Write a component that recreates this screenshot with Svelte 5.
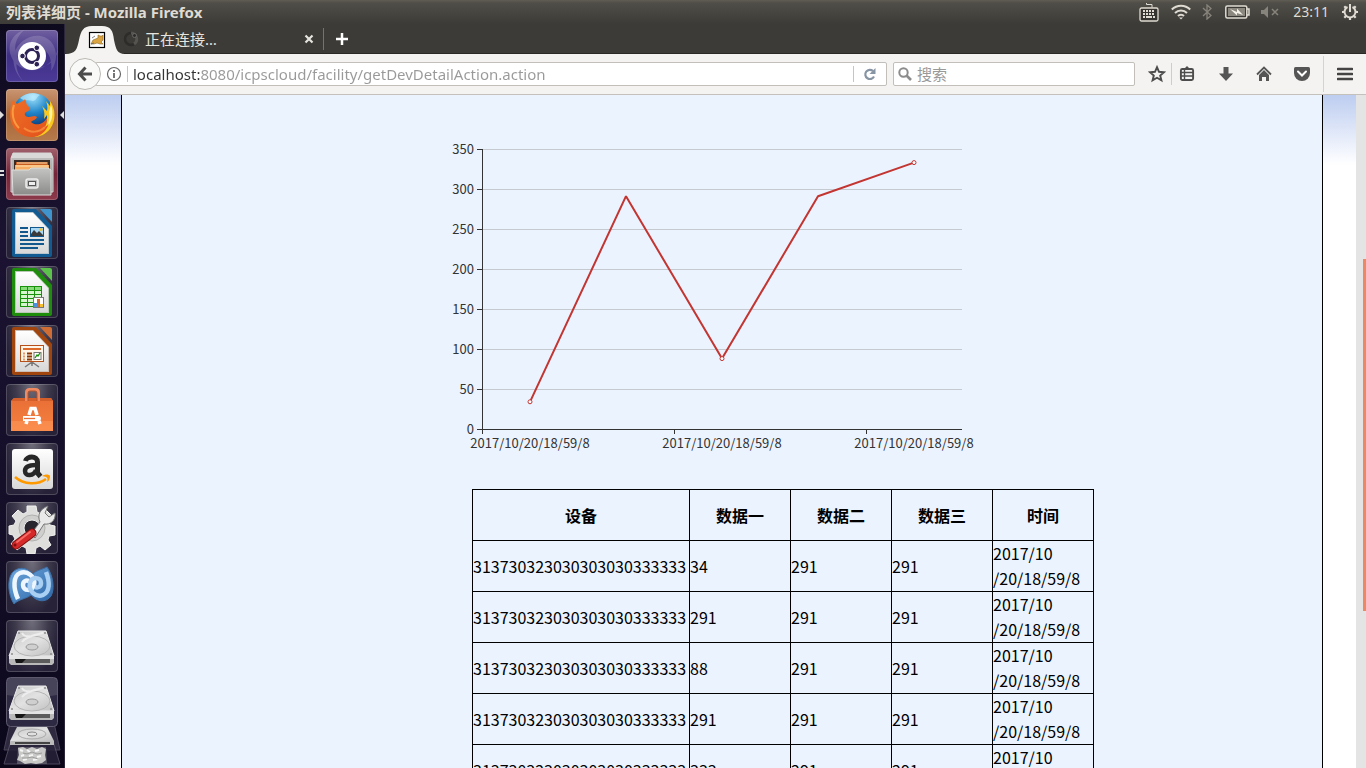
<script>
  const device = '313730323030303030333333';
  const stamp = '2017/10/20/18/59/8';
  const headers = ['设备', '数据一', '数据二', '数据三', '时间'];
  const values = [34, 291, 88, 291, 333];
  const ticks = [0, 50, 100, 150, 200, 250, 300, 350];

  const plotX = (i) => 60 + 48 + i * 96;
  const plotY = (v) => 340 - v * 0.8;
  const line = values.map((v, i) => `${plotX(i)},${plotY(v)}`).join(' ');
</script>

{#snippet drive()}
  <path d="M12 11h28l8 25H3z" fill="url(#metal)" stroke="#ececec" stroke-width="1" />
  <path d="M3 36h45v7l-2 2H5l-2-2z" fill="#b9b9b9" />
  <path d="M3 36h45v3H3z" fill="#e4e4e4" />
  <path d="M9 39h35v4H10z" fill="#5c5c5c" />
  <path d="M9 39h11l-4 4h-6z" fill="#161616" />
  <ellipse cx="26" cy="26" rx="18" ry="10" fill="none" stroke="#b5b5b5" />
  <path d="M16 13c4 7 15 1 20 0 4 0-15 2-20 9" fill="none" stroke="#ededed" stroke-width="2" />
  <ellipse cx="26" cy="27" rx="6" ry="3" fill="#cfcfcf" stroke="#999" />
  <g fill="#8d8d8d"><circle cx="13" cy="13" r="1" /><circle cx="39" cy="13" r="1" /><circle cx="6" cy="34" r="1" /><circle cx="45" cy="34" r="1" /></g>
{/snippet}

<div class="desktop">
  <header class="panel">
    <div class="window-title">列表详细页 - Mozilla Firefox</div>
    <div class="indicators">
      <svg class="ind kb" width="20" height="22" viewBox="0 0 20 22" fill="none" stroke="#dfdbd2">
        <path d="M7.500 2v1.500h5.500v3" /><rect x="1" y="7" width="18" height="13" rx="1.500" fill="#34332f" stroke-width="1.300" />
        <path d="M4 10h12M4 13h12" stroke-width="2" stroke-dasharray="2 1" /><path d="M4 16h2m1 0h6m1 0h2" stroke-width="2" />
      </svg>
      <svg class="ind wifi" width="20" height="16" viewBox="0 0 20 16" fill="none" stroke="#dfdbd2" stroke-width="2">
        <path d="M.8 5.500a13 13 0 0 1 18.400 0M4 9a8.500 8.500 0 0 1 12 0M7 12a4.200 4.200 0 0 1 6 0" /><path d="M8 13.500h4l-2 2z" fill="#dfdbd2" stroke="none" />
      </svg>
      <svg class="ind bt" width="10" height="16" viewBox="0 0 10 16" fill="none" stroke="#87847b" stroke-width="1.300">
        <path d="M1 4l8 7.500L5 15V1l4 3.500L1 12" />
      </svg>
      <svg class="ind bat" width="25" height="14" viewBox="0 0 25 14">
        <rect x=".8" y="1" width="21" height="12" rx="1.500" fill="#3b3a36" stroke="#dfdbd2" stroke-width="1.500" />
        <path d="M22 4h2v6h-2" fill="none" stroke="#dfdbd2" stroke-width="1.500" /><path d="M3 3h17v8H3z" fill="#8b887f" />
        <path d="M5 4l7 3V3.500l6 6.500-6-2v2.500z" fill="#f4f1e9" />
      </svg>
      <svg class="ind mute" width="18" height="14" viewBox="0 0 18 14" fill="#87847b">
        <path d="M0 5h3l4-4v12L3 9H0z" /><path d="M11 4l6 6m0-6l-6 6" stroke="#87847b" stroke-width="1.500" />
      </svg>
      <span class="clock">23:11</span>
      <svg class="ind gear" width="18" height="18" viewBox="0 0 18 18" fill="none" stroke="#dfdbd2">
        <path d="M9 1v8" stroke-width="2" /><path d="M6.500 4a5.500 5.500 0 1 0 5 0" stroke-width="2" />
        <path d="M9 14v3M14 9h3M1 9h3M12.500 12.500l2.200 2.200M5.500 12.500l-2.200 2.200M12.500 5.500l2.200-2.200M5.500 5.500L3.300 3.300" stroke-width="2.200" />
      </svg>
    </div>
  </header>

  <div class="workspace">
    <nav class="launcher" aria-label="Launcher">
      <svg class="defs" width="0" height="0">
        <defs>
          <linearGradient id="metal" x1="0" y1="0" x2="1" y2="1"><stop offset="0" stop-color="#c4c4c4" /><stop offset=".5" stop-color="#e2e2e2" /><stop offset="1" stop-color="#bdbdbd" /></linearGradient>
          <linearGradient id="paper" x1="0" y1="0" x2="0" y2="1"><stop offset="0" stop-color="#fff" /><stop offset="1" stop-color="#d8d8d8" /></linearGradient>
          <radialGradient id="globe" cx=".5" cy=".1" r=".8"><stop offset="0" stop-color="#9fe2fb" /><stop offset=".5" stop-color="#1f84c8" /><stop offset="1" stop-color="#0c2e6c" /></radialGradient>
          <linearGradient id="fox" x1="0" y1="0" x2="1" y2="1"><stop offset="0" stop-color="#ee6f26" /><stop offset="1" stop-color="#e2521c" /></linearGradient>
          <linearGradient id="cabinet" x1="0" y1="0" x2="0" y2="1"><stop offset="0" stop-color="#c4c4c2" /><stop offset="1" stop-color="#8b8b89" /></linearGradient>
          <linearGradient id="bag" x1="0" y1="0" x2="0" y2="1"><stop offset="0" stop-color="#e86f36" /><stop offset="1" stop-color="#f5803f" /></linearGradient>
          <linearGradient id="swirl" x1="0" y1="0" x2="1" y2="1"><stop offset="0" stop-color="#6fa8dc" /><stop offset="1" stop-color="#2a64a8" /></linearGradient>
        </defs>
      </svg>

      <button class="tile home" aria-label="Dash">
        <svg viewBox="0 0 52 52">
          <g fill="#fff" opacity=".16"><path d="M18 52C4 40 2 16 24 7 44 0 58 22 45 41 48 22 34 12 20 17 7 24 8 42 18 52z" /><path d="M52 20C40 48 12 44 5 26 0 12 9 3 18 0-1 18 14 40 32 38 44 36 50 30 52 20z" /></g>
          <circle cx="26" cy="26" r="14" fill="#fff" />
          <circle cx="26" cy="26" r="6.500" fill="none" stroke="#2d2155" stroke-width="3" />
          <g fill="#2d2155" stroke="#fff"><circle cx="16.500" cy="26" r="2.800" /><circle cx="30.800" cy="17.800" r="2.800" /><circle cx="30.800" cy="34.200" r="2.800" /></g>
        </svg>
      </button>
      <button class="tile firefox" aria-label="Firefox">
        <svg viewBox="0 0 52 52">
          <circle cx="27" cy="24" r="20" fill="url(#globe)" />
          <path d="M14 9c5-5 14-6 20-3-4 2-3 5-7 6-4-2-7 1-13-3z" fill="#c8f0ff" opacity=".6" />
          <path d="M44 12c6 8 6 20 0 28-4 5-10 8-16 8 9-6 14-14 13-22l-3 4c1-6 0-9-2-13l5 5c1-4 0-7-1-10l4 5z" fill="#f9c81e" />
          <path d="M45 16c3 8 1 17-4 22 2-5 3-10 2-15" fill="#fff3a2" />
          <path d="M7 11l4 4c3-2 6-2 8-5 1 2 1 4 2 6l3 3c0 3-3 3-5 5-1 3 2 4 4 4 3 0 5-2 8 0-1 3-4 3-6 5 4 4 12 3 16-4 0 5-1 7-2 9 2-1 3-2 4-4-2 8-9 14-17 14C13 48 4 38 4 25c0-5 1-10 3-14z" fill="url(#fox)" />
          <path d="M8 16c-3 8-1 17 5 23" fill="none" stroke="#f99a3e" stroke-width="2" /><path d="M18 39c6 5 15 5 21-1" fill="none" stroke="#f5873a" stroke-width="2" />
        </svg>
        <i class="running"></i><i class="focused"></i>
      </button>
      <button class="tile files" aria-label="Files">
        <svg viewBox="0 0 52 52">
          <path d="M7 5h38l2 5v34H5V10z" fill="url(#cabinet)" stroke="#d5d5d5" /><path d="M7 5h38l2 5H5z" fill="#d9d9d7" />
          <path d="M8 12h36v10H8z" fill="#3b2b27" /><path d="M10 14h32v8H10z" fill="#c75c20" /><path d="M9 17h34v5H9z" fill="#f6ad61" />
          <path d="M11 15h30M10 18h32" stroke="#ffe0b0" /><path d="M6 22h17l2-2h17l3 2v25H7z" fill="url(#cabinet)" stroke="#dedede" />
          <rect x="20" y="31" width="12" height="9" rx="2" fill="#bbb" stroke="#eee" stroke-width="1.500" /><rect x="22.500" y="33.500" width="7" height="4" fill="#eee" stroke="#555" />
        </svg>
        <i class="running double"></i>
      </button>
      <button class="tile" aria-label="Writer">
        <svg viewBox="0 0 52 52">
          <path d="M8 2h22l16 17v29q0 2-2 2H8q-2 0-2-2V4q0-2 2-2z" fill="#115b92" /><path d="M34 2h10q2 0 2 2v11z" fill="#3f94cd" />
          <path d="M9 5h18l16 17v25H9z" fill="#b8c4cc" /><path d="M10 6h17l15 16v24H10z" fill="url(#paper)" />
          <path d="M14 20h8v2h-8zM14 24h8v2h-8zM14 28h8v2h-8zM14 32h24v2H14zM14 36h24v2H14zM14 40h18v2H14z" fill="#13588c" />
          <rect x="24.500" y="20.500" width="13" height="9" fill="#a9d7f4" stroke="#13588c" /><path d="M25 29v-2l3-4 3 3 2-2 4 4v1z" fill="#3b3b3b" /><circle cx="35" cy="22.500" r="1.500" fill="#f2c12d" />
        </svg>
      </button>
      <button class="tile" aria-label="Calc">
        <svg viewBox="0 0 52 52">
          <path d="M8 2h22l16 17v29q0 2-2 2H8q-2 0-2-2V4q0-2 2-2z" fill="#1f8d0c" /><path d="M34 2h10q2 0 2 2v11z" fill="#5cc24b" />
          <path d="M9 5h18l16 17v25H9z" fill="#b9c8b5" /><path d="M10 6h17l15 16v24H10z" fill="url(#paper)" />
          <path d="M14 20h22v21H14z" fill="#18910b" /><path d="M15 25h6v3h-6zM22 25h6v3h-6zM29 25h6v3h-6zM15 29h6v3h-6zM22 29h6v3h-6zM29 29h6v3h-6zM15 33h6v3h-6zM22 33h6v3h-6zM15 37h6v3h-6zM22 37h6v3h-6z" fill="#d7f6cf" /><path d="M15 21h6v3h-6zM22 21h6v3h-6zM29 21h6v3h-6z" fill="#87dc79" />
          <rect x="27.500" y="31.500" width="10" height="10" fill="#fff" stroke="#777" /><path d="M28 37h3v4h-3z" fill="#4a92dd" /><path d="M31 33h3v8h-3z" fill="#db6622" /><path d="M34 38h3v3h-3z" fill="#f2c12d" />
        </svg>
      </button>
      <button class="tile" aria-label="Impress">
        <svg viewBox="0 0 52 52">
          <path d="M8 2h22l16 17v29q0 2-2 2H8q-2 0-2-2V4q0-2 2-2z" fill="#a1450f" /><path d="M34 2h10q2 0 2 2v11z" fill="#cf6d35" />
          <path d="M9 5h18l16 17v25H9z" fill="#cbbdb4" /><path d="M10 6h17l15 16v24H10z" fill="url(#paper)" />
          <path d="M26 37l-7 5m7-5l7 5M26 37v4" stroke="#777" stroke-width="1.500" /><rect x="14.500" y="20.500" width="23" height="16" fill="#fff5e9" stroke="#b6501b" />
          <path d="M17 24h18" stroke="#dd6a28" stroke-width="2" /><path d="M17 28.500h2m-2 3h2m-2 3h2" stroke="#e79a6c" stroke-width="2" /><path d="M21 28.500h5m-5 3h5m-5 3h5" stroke="#8b3807" stroke-width="2" />
          <rect x="28" y="27.500" width="7" height="7" fill="#fff" stroke="#777" /><path d="M29 33l2-3 1 1 2-3" fill="none" stroke="#18910b" stroke-width="1.300" />
        </svg>
      </button>
      <button class="tile" aria-label="Software">
        <svg viewBox="0 0 52 52">
          <path d="M5 17l3-3h37l2 3v30H5z" fill="url(#bag)" /><path d="M5 17h42l-2-3H8z" fill="#d55f2b" /><path d="M5 37h42v10H5z" fill="#ff9a5d" opacity=".5" />
          <path d="M20.500 17V8.500q0-3 3-3h6q3 0 3 3V17" fill="none" stroke="#ef8a61" stroke-width="3" /><path d="M22 17V9q0-2 2-2h5q2 0 2 2v8" fill="none" stroke="#b9532c" />
          <path d="M20 40l1-3m2-6l2-6.500h4l2 6.500m2 6l1 3" fill="none" stroke="#fff" stroke-width="3.600" /><path d="M17 32h16q2 0 2 2.500T33 37H17z" fill="#fff" /><path d="M18 34.500h11" stroke="#e86f36" stroke-width="1.300" />
        </svg>
      </button>
      <button class="tile" aria-label="Amazon">
        <svg viewBox="0 0 52 52">
          <rect x="6" y="6" width="41" height="40" rx="3" fill="url(#paper)" />
          <path d="M19.500 18c1-5 12-6 12 1v11l3 3.500" fill="none" stroke="#272727" stroke-width="5" /><path d="M30 22c-7 0-11 2-11 6 0 6 9 5 11-1" fill="none" stroke="#272727" stroke-width="4.500" />
          <path d="M9 34c9 8 23 8 31 2" fill="none" stroke="#f90" stroke-width="2.500" /><path d="M36 33c3-2 7-2 8 0 0 3-1 5-3 6 1-4 1-5-5-6z" fill="#f90" />
        </svg>
      </button>
      <button class="tile" aria-label="Settings">
        <svg viewBox="0 0 52 52">
          <path d="M21 4h9l1 6 4 2 5-4 6 6-4 5 2 4 5 1v9l-6 1-1 4 3 5-6 5-5-4-4 2-1 6h-8l-1-6-4-2-5 4-6-6 4-5-2-4-4-1v-8l5-1 2-4-4-5 6-6 5 4 4-2z" fill="#dededc" stroke="#f2f2f0" />
          <circle cx="26" cy="26" r="13" fill="#cfcfcd" stroke="#b1b1af" /><circle cx="26" cy="26" r="8" fill="#29252e" stroke="#eee" />
          <path d="M25 32l9-12c-3-7 0-13 8-16l-3 7 4 4 6-4c1 8-5 12-11 11L29 36z" fill="#e9e9e9" stroke="#777" />
          <path d="M26 31L10 43" stroke="#7f0f0f" stroke-width="9" stroke-linecap="round" /><path d="M26 31L10 43" stroke="#d62a2a" stroke-width="7" stroke-linecap="round" /><path d="M24 30L11 40" stroke="#f56c66" stroke-width="2" stroke-linecap="round" /><circle cx="9" cy="43" r="1.500" fill="#7f0f0f" />
        </svg>
      </button>
      <button class="tile" aria-label="MonoDevelop">
        <svg viewBox="0 0 52 52">
          <path d="M8 43C2 34 1 19 6 12c5-6 14-7 21 1 3-4 9-4 14-7 6 8 8 22 4 29-5 7-14 6-20-1-5 4-12 4-17 9z" fill="url(#swirl)" stroke="#3d6fa6" />
          <path d="M12 38C7 27 7 15 14 12c7-3 16 4 14 12-2 7-11 6-11 0 0-4 3-5 6-4" fill="none" stroke="#eef6ff" stroke-width="4.500" />
          <path d="M40 11c4 10 4 20-3 23-7 3-15-4-13-12 2-7 11-6 11 0 0 4-3 5-6 4" fill="none" stroke="#a9cff2" stroke-width="4.500" />
        </svg>
      </button>
      <button class="tile" aria-label="Volume"><svg viewBox="0 0 52 52">{@render drive()}</svg></button>
      <button class="pile" aria-label="More volumes">
        <svg viewBox="0 0 64 91">
          <path d="M10 46h44l6 27H4z" fill="#3a354b" opacity=".75" stroke="#5e596d" />
          <path d="M11 64h42l7 23H4z" fill="#28233a" opacity=".8" stroke="#5e596d" />
          <rect x="6.500" y=".5" width="51" height="49" rx="4" fill="#2e2942" stroke="#5e596d" /><path d="M9 1h46q2 0 2 4v13q-25 5-50 0V4q0-3 2-3z" fill="#fff" opacity=".12" />
          <g transform="translate(6 -2)">{@render drive()}</g>
          <path d="M17 50h30l7 14H10z" fill="url(#metal)" /><ellipse cx="32" cy="57" rx="14" ry="5" fill="none" stroke="#aaa" /><ellipse cx="32" cy="57" rx="5" ry="2" fill="none" stroke="#888" /><path d="M10 64h44v4H10z" fill="#bbb" /><path d="M15 65h35v2H15z" fill="#444" />
          <path d="M18 70h28l1 17H17z" fill="#77747f" opacity=".6" />
          <path d="M18 71l5-1 4 2 5-2 5 2 5-2 4 2-1 6 1 5-4 3-6 1-5-1-6 1-5-3-3-1 2-5z" fill="#c9c9c7" /><path d="M20 73l3 1m4-1l3 2m5-1l4-1M21 79l3-1m5 1l4-1m4 2l4-1M23 83l4-1m6 1l5-1" fill="none" stroke="#f5f5f5" stroke-width="2" /><path d="M23 76l4 1 5-2 5 2 5-1M22 81l5 0 5-1 6 2" fill="none" stroke="#9c9c9a" />
        </svg>
      </button>
    </nav>

    <main class="browser">
      <div class="tabs">
        <button class="pinned" aria-label="列表详细页">
          <svg width="60" height="30" viewBox="0 0 60 30">
            <path d="M0 30c11 0 12-5 14-14C16 7 18 2 27 2h10c9 0 11 5 12 14 2 9 3 14 11 14z" fill="#f4f3f1" />
            <rect x="24.500" y="8.500" width="15" height="15" fill="#fff" stroke="#000" stroke-width="1.200" />
            <path d="M26 20l2-4 5-2v-3l2 1h2l1-1v5l-2 2 2 2h-3l-3-1-3 1z" fill="#d9a441" stroke="#8b6a2a" stroke-width=".6" /><path d="M27 14l3-2m-4 8l3-1" stroke="#666" stroke-width=".8" />
          </svg>
        </button>
        <button class="tab">
          <svg width="16" height="16" viewBox="0 0 16 16" fill="none"><circle cx="8" cy="8" r="6" stroke="#2d2c2a" stroke-width="2.500" /><path d="M8 2a6 6 0 0 1 3 11" stroke="#55544f" stroke-width="3" /><circle cx="11.500" cy="4.500" r="2" fill="#2d2c2a" stroke="#777" stroke-width=".7" /></svg>
          <span>正在连接…</span>
        </button>
        <button class="close" aria-label="Close tab"><svg width="10" height="10" viewBox="0 0 10 10"><path d="M1.500 1.500l7 7m0-7l-7 7" stroke="#e6e4de" stroke-width="2.200" /></svg></button>
        <button class="new-tab" aria-label="New tab"><svg width="14" height="14" viewBox="0 0 14 14"><path d="M7 1v12M1 7h12" stroke="#fff" stroke-width="2.500" /></svg></button>
      </div>

      <div class="toolbar">
        <button class="back" aria-label="Back"><svg width="16" height="16" viewBox="0 0 16 16" fill="none" stroke="#4c4c4c" stroke-width="3"><path d="M8.500 1.500L2.500 8l6 6.500M3 8h12" /></svg></button>
        <div class="url">
          <svg width="16" height="16" viewBox="0 0 16 16" fill="none" stroke="#666"><circle cx="8" cy="8" r="6.500" stroke-width="1.200" /><path d="M8 7v5M8 4v2" stroke-width="1.800" /></svg>
          <span class="bar"></span>
          <input aria-label="Address" value="localhost:8080/icpscloud/facility/getDevDetailAction.action" />
          <span class="bar"></span>
          <button class="reload" aria-label="Reload"><svg width="14" height="14" viewBox="0 0 14 14"><path d="M11 9.500A4.600 4.600 0 1 1 10 4" fill="none" stroke="#8794a3" stroke-width="2.200" /><path d="M12.500 1v6h-6z" fill="#8794a3" /></svg></button>
        </div>
        <div class="search">
          <svg width="14" height="14" viewBox="0 0 14 14" fill="none" stroke="#8c8c8c" stroke-width="2"><circle cx="5.500" cy="5.500" r="4.200" /><path d="M8.500 8.500l4.500 4.500" stroke-width="2.600" /></svg>
          <input aria-label="搜索" placeholder="搜索" />
        </div>
        <div class="actions">
          <button class="star" aria-label="Bookmark"><svg width="18" height="18" viewBox="0 0 18 18"><path d="M9 2.200l2 4.600 5 .4-3.800 3.300 1.200 4.900L9 12.800l-4.400 2.600 1.200-4.900L2 7.200l5-.4z" fill="none" stroke="#4c4c4c" stroke-width="1.900" /></svg></button>
          <button class="list" aria-label="Bookmarks list"><svg width="16" height="16" viewBox="0 0 16 16"><path d="M5 3l3-3 3 3" fill="#4c4c4c" /><rect x="1.900" y="3" width="12.200" height="11" rx="1.500" fill="none" stroke="#4c4c4c" stroke-width="1.900" /><path d="M2 6.500h12M2 10h12M5.500 3v11" stroke="#4c4c4c" stroke-width="1.400" /></svg></button>
          <button aria-label="Downloads"><svg width="16" height="16" viewBox="0 0 16 16"><path d="M5.500 1h5v6.500H15L8 15 1 7.500h4.500z" fill="#555" /></svg></button>
          <button aria-label="Home"><svg width="16" height="16" viewBox="0 0 16 16"><path d="M1 8.500l7-7 7 7" fill="none" stroke="#555" stroke-width="1.800" /><path d="M3 9l5-5 5 5v6h-3v-4H6v4H3z" fill="#555" /></svg></button>
          <button aria-label="Pocket"><svg width="16" height="16" viewBox="0 0 16 16"><path d="M1.500 1h13q1.500 0 1.500 1.500V7a8 8 0 0 1-16 0V2.500Q0 1 1.500 1z" fill="#555" /><path d="M4 5.500l4 4 4-4" fill="none" stroke="#fff" stroke-width="2" stroke-linecap="round" /></svg></button>
          <button class="menu" aria-label="Menu"><svg width="16" height="14" viewBox="0 0 16 14"><path d="M1 2h14M1 7h14M1 12h14" stroke="#444" stroke-width="2.600" stroke-linecap="round" /></svg></button>
        </div>
      </div>

      <div class="viewport">
        <div class="page">
          <section class="content">
            <svg class="chart" width="600" height="394" viewBox="0 6 600 394" role="img" aria-label="数据一">
              {#each ticks as t}
                {#if t > 0}<path d="M60 {plotY(t) + 0.5}h480" stroke="#c4cad0" />{/if}
                <path d="M55 {plotY(t) + 0.5}h5" stroke="#333" />
                <text x="52" y={plotY(t) + 5} text-anchor="end">{t}</text>
              {/each}
              <path d="M60.500 60v281M60 340.500h480M252.500 340v5M444.500 340v5M60.500 340v5" stroke="#333" fill="none" />
              <polyline points={line} fill="none" stroke="#c23531" stroke-width="2" stroke-linejoin="bevel" />
              {#each values as v, i}
                {#if i % 2 === 0}
                  <circle cx={plotX(i)} cy={plotY(v)} r="2" fill="#fff" stroke="#c23531" />
                  <text x={plotX(i)} y="359" text-anchor="middle">{stamp}</text>
                {/if}
              {/each}
            </svg>
            <table>
              <thead><tr>{#each headers as h}<th scope="col">{h}</th>{/each}</tr></thead>
              <tbody>
                {#each values as v}
                  <tr><td>{device}</td><td>{v}</td><td>291</td><td>291</td><td>2017/10<wbr />/20/18/59/8</td></tr>
                {/each}
              </tbody>
            </table>
          </section>
        </div>
        <div class="scrollbar"><span></span></div>
      </div>
    </main>
  </div>
</div>

<style>
  :global(body) { background: #fff; }
  .desktop { height: 100vh; display: flex; flex-direction: column; overflow: hidden; font: 15px/20px "Noto Sans", "Noto Sans CJK SC", sans-serif; }
  button { border: 0; padding: 0; margin: 0; background: none; font: inherit; color: inherit; display: flex; align-items: center; justify-content: center; }
  svg { display: block; flex: none; }
  input { border: 0; outline: 0; padding: 0; background: none; font: inherit; min-width: 0; }

  .panel { height: 24px; flex: none; display: flex; align-items: center; justify-content: space-between; padding: 0 7px 0 6px; color: #dfdbd2; background: linear-gradient(#5f5d54, #504e48 12%, #3c3b37); }
  .window-title { font-weight: 700; }
  .indicators { display: flex; align-items: center; }
  .wifi { margin-left: 12px; }
  .bt { margin-left: 11px; }
  .bat { margin-left: 13px; }
  .mute { margin-left: 11px; }
  .clock { margin: 0 12px 0 14px; font-size: 14px; }

  .workspace { flex: 1; min-height: 0; display: flex; }
  .launcher { width: 64px; flex: none; overflow: hidden; padding: 6px 0 0; display: flex; flex-direction: column; align-items: center; gap: 7px; background: linear-gradient(#0e0a1e, #1b1331 30%, #140e28 70%, #0b0719); border-right: 1px solid #2b2639; position: relative; }
  .defs { position: absolute; }
  .tile { width: 52px; height: 52px; flex: none; position: relative; border-radius: 4px; background: radial-gradient(ellipse at 50% 0, #716e7c 0, #3e3a4c 45%, #272238 75%); box-shadow: inset 0 0 0 1px #ffffff2e; }
  .tile svg { width: 52px; height: 52px; }
  .home { background: linear-gradient(#705f9f, #3f2f85 50%, #4c3a98); }
  .firefox { background: linear-gradient(#c99572, #a96638 50%, #b57a4b); }
  .files { background: linear-gradient(#a0616c, #752538 50%, #8c3a4c); }
  .pile { width: 64px; flex: none; margin-top: -2px; }
  .pile svg { width: 64px; height: 91px; }
  .running, .focused { position: absolute; top: 22px; border: 4px solid transparent; }
  .running { left: -6px; border-left-color: #ddd; border-right: 0; }
  .focused { right: -6px; border-right-color: #ddd; border-left: 0; }
  .double { width: 4px; height: 2px; border: solid #ddd; border-width: 2px 0; }

  .browser { flex: 1; min-width: 0; display: flex; flex-direction: column; }
  .tabs { height: 30px; flex: none; display: flex; align-items: center; background: #3c3b37; color: #e6e4de; box-shadow: inset 0 -1px #2a2926; }
  .tab { flex: none; width: 176px; justify-content: flex-start; gap: 6px; margin-left: -2px; }
  .close { width: 20px; height: 20px; }
  .new-tab { width: 37px; height: 22px; margin-left: 4px; border-left: 1px solid #75736c; }

  .toolbar { height: 40px; flex: none; display: flex; align-items: center; padding-left: 4px; background: #f4f3f1; border-bottom: 1px solid #c4c1bc; }
  .back { width: 32px; height: 32px; flex: none; box-sizing: border-box; border: 1px solid #bcb9b4; border-radius: 50%; background: #f9f9f8; position: relative; }
  .url, .search { height: 24px; box-sizing: border-box; border: 1px solid #c2bfba; background: #fff; display: flex; align-items: center; border-radius: 2px; }
  .url { flex: 1; min-width: 0; margin-left: -6px; padding-left: 10px; }
  .url input { flex: 1; height: 22px; background: linear-gradient(90deg, #333 67px, #999 67px); background-clip: text; -webkit-background-clip: text; color: transparent; }
  .bar { width: 1px; height: 16px; background: #c5c5c5; margin: 0 5px; }
  .reload { width: 22px; height: 22px; margin-right: 5px; }
  .search { width: 242px; margin-left: 6px; padding-left: 4px; gap: 5px; }
  .search input { flex: 1; height: 22px; }
  .search input::placeholder { color: #999; opacity: 1; }
  .actions { display: flex; align-items: center; margin-left: 10px; }
  .actions button { width: 38px; height: 22px; }
  .actions .star { width: 26px; padding-right: 3px; }
  .actions .list { width: 36px; padding-right: 6px; box-sizing: border-box; border-left: 1px solid #cfcdc9; }
  .actions .menu { width: 43px; height: 36px; margin-left: 2px; border-left: 1px solid #d5d3cf; }

  .viewport { flex: 1; min-height: 0; display: flex; }
  .page { flex: 1; min-width: 0; overflow: hidden; padding: 0 33px 0 56px; background: linear-gradient(#bdcdf0, #fff 70px); }
  .content { min-height: 100%; border: solid #000; border-width: 0 1px; background: #ebf3ff; font-family: "Noto Sans CJK SC", sans-serif; }
  .chart { margin: 0 auto; }
  .chart text { font-size: 13px; fill: #333; }
  table { margin-left: 350px; width: 622px; table-layout: fixed; border-collapse: collapse; font-size: 16px; line-height: 25px; color: #000; }
  th, td { border: 1px solid #000; padding: 0; height: 50px; width: 100px; text-align: left; white-space: nowrap; }
  th { text-align: center; }
  td:last-child { white-space: normal; }
  th:first-child { width: 216px; }
  .scrollbar { width: 10px; flex: none; background: #e4e4e4; display: flex; justify-content: flex-end; align-items: flex-start; padding-top: 164px; box-sizing: border-box; }
  .scrollbar span { width: 3px; height: 352px; background: #f08763; }
</style>
